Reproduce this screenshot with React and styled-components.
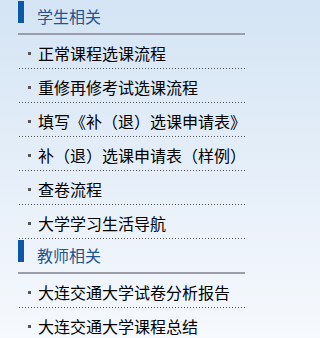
import React from "react";
import styled, { createGlobalStyle } from "styled-components";

const GlobalStyle = createGlobalStyle`
  html, body {
    margin: 0;
    padding: 0;
  }
  body {
    width: 245px;
    height: 338px;
    overflow: hidden;
    background: linear-gradient(#d4e4f4, #f6f9fd);
    font-family: "Noto Sans CJK SC", "Microsoft YaHei", sans-serif;
  }
`;

const groups = [
  {
    title: "学生相关",
    links: [
      "正常课程选课流程",
      "重修再修考试选课流程",
      "填写《补（退）选课申请表》",
      "补（退）选课申请表（样例）",
      "查卷流程",
      "大学学习生活导航",
    ],
  },
  {
    title: "教师相关",
    links: ["大连交通大学试卷分析报告", "大连交通大学课程总结"],
  },
];

const App = () => {
  return (
    <>
      <GlobalStyle />
      <Sidebar>
        {groups.map((group) => (
          <section key={group.title}>
            <Heading>
              <Bar />
              <HeadingText>{group.title}</HeadingText>
            </Heading>
            <List>
              {group.links.map((link) => (
                <Item key={link}>
                  <Dot />
                  <LinkText href="#">{link}</LinkText>
                </Item>
              ))}
            </List>
          </section>
        ))}
      </Sidebar>
    </>
  );
};

const Sidebar = styled.div`
  margin-left: 18px;
  width: 227px;
`;
const Heading = styled.div`
  display: flex;
  align-items: flex-start;
  height: 33px;
  border-bottom: 2px solid #9c9cab;
`;
const Bar = styled.span`
  width: 6px;
  height: 22px;
  margin-top: 1px;
  background: #0b58a8;
`;
const HeadingText = styled.span`
  margin-left: 13px;
  margin-top: 5px;
  font-size: 16px;
  line-height: 22px;
  color: #24548f;
`;
const List = styled.ul`
  list-style: none;
  margin: 0;
  padding: 0;
`;
const Item = styled.li`
  display: flex;
  align-items: center;
  height: 33px;
  white-space: nowrap;
  overflow: hidden;
  background-image: linear-gradient(to right, #555 1px, transparent 1px);
  background-size: 3px 1px;
  background-repeat: repeat-x;
  background-position: 1px bottom;
  padding-bottom: 1px;
`;
const Dot = styled.span`
  flex: none;
  width: 3px;
  height: 3px;
  margin: 3px 7px 0 10px;
  background: #555;
`;
const LinkText = styled.a`
  font-size: 16px;
  line-height: 22px;
  color: #000;
  text-decoration: none;
  padding-top: 2px;
`;

export default App;
